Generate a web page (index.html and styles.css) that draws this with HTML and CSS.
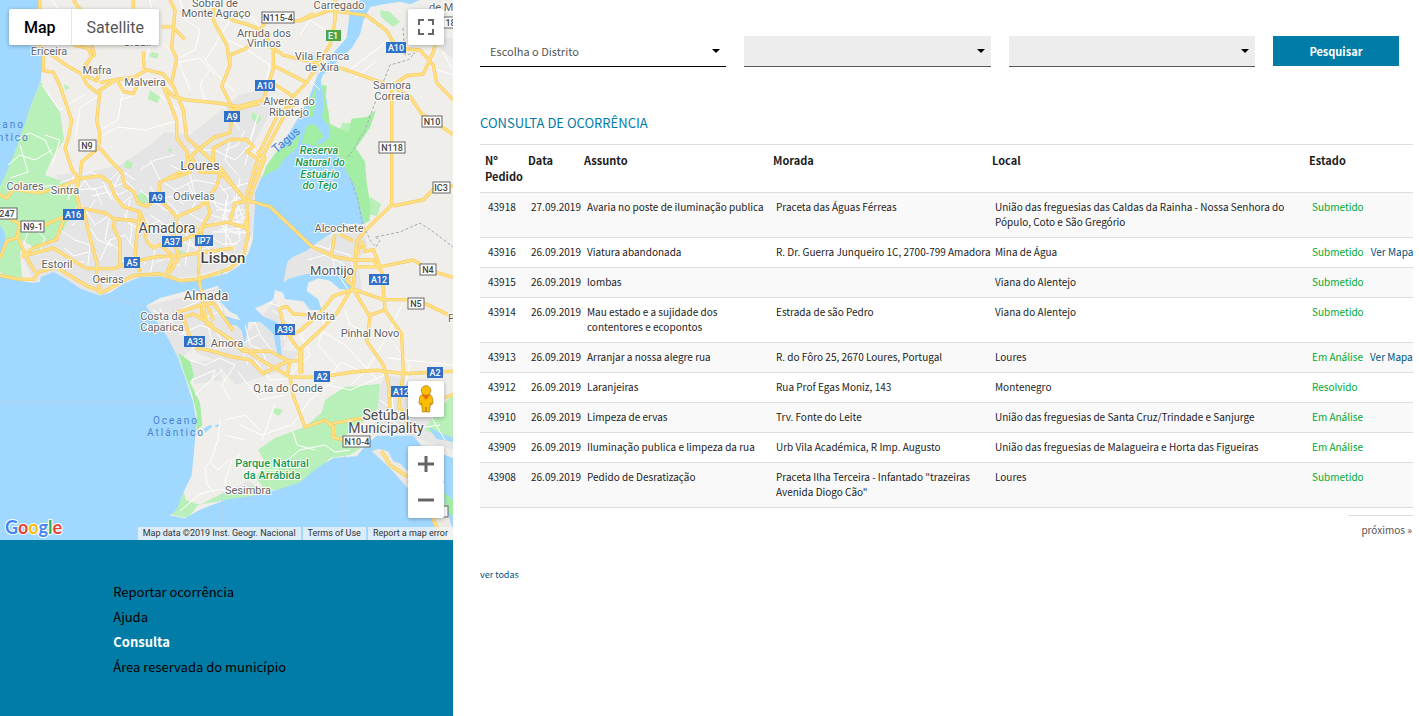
FILE: index.html
```html
<!DOCTYPE html>
<html lang="pt">
<head>
<meta charset="utf-8">
<title>Consulta de ocorrência</title>
<link rel="stylesheet" href="styles.css">
</head>
<body>
<div class="page">
  <aside class="sidebar">
    <div class="map">
      <svg class="map-canvas" viewBox="0 0 453 540" preserveAspectRatio="xMinYMin slice" role="img" aria-label="Lisboa">
        <rect class="land" width="453" height="540"/>
        <!-- urban areas -->
        <g class="urban">
          <path d="M55 175L90 172L120 165L150 145L165 132L190 135L215 115L240 95L262 90L275 105L250 150L262 178L255 230L243 250L225 268L190 277L150 277L115 286L103 296L75 287L50 273L34 283L22 255L55 235L75 200Z"/>
          <path d="M147 306L218 288L225 314L250 330L275 300L290 330L283 350L300 352L285 370L235 385L215 360L190 350L178 362L165 332Z"/>
          <path d="M283 283L283 262L320 240L360 225L368 245L358 262L362 290L345 290L335 277Z"/>
          <path d="M375 400L385 375L405 378L425 405L453 435L453 450L405 435L375 430ZM185 362L218 360L222 380L195 384Z"/>
          <path d="M300 55L320 50L335 68L318 78ZM440 38H453V58L442 50ZM225 495L248 480L270 495Z"/>
        </g>
        <!-- parks -->
        <g class="park">
          <path d="M41 81L48 95L60 112L64 140L52 158L45 175L70 184L80 200L60 235L38 250L22 240L20 255L22 277L8 277L0 272V180Z"/>
          <path d="M322 412L325 400L345 387L380 384L378 404L375 415L352 428L345 437L370 442L350 455L330 458L310 480L290 490L265 490L256 478L265 462L258 450L275 438L305 427Z"/>
          <path d="M172 515L183 490L186 500L200 505L225 492L250 486L270 488L248 500L225 500L198 505L188 518Z"/>
          <path d="M152 52l7 2-3 5-7-3zM150 90l10 7-3 6-9-4zM127 160l6 3-2 6-8-2zM252 112l10 6-5 6-5-5zM64 84l6 4-5 2zM167 148l6 2-3 3zM135 196l10-4 3 10-7 3zM370 197l11 7-4 12-11-2zM342 123l9 0-2 10-9-3zM275 408l8 2-4 6-7-4zM380 10l10 2 10 10-7 5-12-10zM176 250l8 1-3 5-6-3zM437 410L453 395V443L425 430Z"/>
        </g>
        <!-- coastline and roads are plotted on a 1359 by 1568 grid -->
        <g transform="scale(.33333 .34439)">
          <path class="water" d="M0 0H115L112 130L130 165L122 235L95 300L70 370L45 440L20 500L0 540ZM0 655L12 670L18 700L8 725L0 745Z"/>
          <path class="water" d="M0 795L40 812L100 822L120 818L122 805L160 790L190 805L240 838L300 858L330 850L370 825L420 805L480 803L540 818L600 812L680 795L720 770L745 735L758 700L765 600L765 560L785 515L840 430L890 350L925 290L950 225L990 165L1040 110L1050 30L1070 5L1085 0H1260L1230 12L1200 5L1150 12L1110 20L1090 60L1080 100L1055 140L1010 180L970 215L960 240L980 290L985 360L1040 400L1110 640L1085 652L1040 650L990 680L950 705L920 728L880 745L862 760L850 820L865 810L900 800L960 788L1000 800L1020 795L1050 815L1055 840L1020 840L990 815L955 808L925 820L920 845L955 870L965 900L930 900L910 875L855 868L850 850L825 842L820 870L790 885L765 895L790 920L830 935L840 980L845 1035L832 1025L820 970L800 950L780 935L745 935L735 1000L725 960L710 945L680 940L665 915L700 925L722 930L710 915L690 905L655 870V830L600 845L560 845L480 865L438 888L465 925L500 975L535 1040L560 1110L580 1170L590 1230L583 1300L575 1380L550 1430L530 1480L510 1497L555 1505L600 1480L680 1450L760 1440L840 1420L900 1400L950 1360L1000 1330L1070 1325L1100 1290L1130 1265L1240 1265L1265 1295L1359 1330V1568H0Z"/>
          <path class="water" d="M610 1245l20-12 8 6-22 16zM645 1235l14-4v6l-12 4zM1285 1240L1330 1262L1359 1270V1282L1310 1275Z"/>
          <path class="reserve" d="M965 245L980 250L976 290L985 320L990 360L1045 385L1055 345L1100 340L1128 320L1110 370L1068 430L1095 470L1100 530L1112 600L1108 640L1093 650L1075 590L1065 540L1040 500L1025 460L985 440L950 425L905 415L920 365L945 360L975 400L985 380L965 345L972 300ZM785 520L800 480L830 440L870 420L905 385L890 430L850 465L835 490L810 500ZM925 340L930 290L950 250L945 310L938 340Z"/>
          <path class="reserve" d="M535 1025L570 1050L582 1090L570 1110L600 1170L607 1235L590 1250L590 1200L575 1140L555 1090ZM1330 1430L1359 1450V1500L1340 1480Z"/>
          <path class="channel" d="M958 235L955 290L950 330L985 375L980 400L955 415"/>
          <path class="sand" d="M1115 1310L1135 1303L1165 1310L1180 1340L1200 1345L1225 1370L1330 1450L1359 1540V1568H1320L1290 1500L1225 1420L1170 1360Z"/>
        </g>
        <!-- local roads -->
        <g class="minor">
          <path d="M52 0L70 25L95 40M180 0L186 20L200 30L195 50L175 60M150 0L155 30L143 68M230 20L215 45L205 60L222 80L235 92M118 80L122 95L118 120L100 130L98 140M135 78V95L120 100M100 95L80 108L75 140M160 95L178 110M98 138L118 127L145 130L180 120M42 85L60 110L75 100L85 95M15 140L30 133L45 140L52 155M8 165L20 155L35 160L52 150M20 145L28 172L10 178M45 135L60 140L52 165M210 70L200 85L205 100L222 105L240 130M178 60L190 90M165 45L180 62L200 58L215 75"/>
          <path d="M20 182L35 190L50 185L70 195M22 250L30 225L45 238L38 255M60 183L90 172L110 180L120 170L135 180M75 170L68 200M82 205L95 225L110 215L105 240L120 250M60 230L75 240L90 245L88 265M95 200L85 215L72 225M100 260L110 240L125 235L135 250L132 270M130 200L125 220L140 230L160 220M145 232L155 250L150 275M150 160L160 180L175 190L195 180L220 185M170 165L190 175L195 195L210 205M140 190L165 210L182 215M150 215L165 225L180 222L190 240L185 265M155 245L180 240L200 250L215 245M200 240L215 255L228 248L240 240M205 200L225 205L245 195M210 215L230 220L250 210M215 180L228 195L222 225L235 250M240 178L236 200L245 225M218 230L245 228M222 190L248 183M230 140L225 160L238 175M140 170L155 160L175 155M110 185L118 195L128 190M190 150L215 150L235 160L250 145M245 130L238 145L225 150M255 125L245 165M258 115L250 140L260 160M88 176L78 190L95 188L102 205M103 182L110 195L120 175L135 190"/>
          <path d="M84 180L92 190L104 186L112 200M92 196L108 192L120 205L132 196M100 176L116 186L126 182M150 186L158 200L172 196L184 204M152 204L166 200L178 212M188 184L196 200L190 214L204 222M212 190L216 206L228 212L240 208M222 214L232 226L246 216M220 224L236 234L248 232M210 236L222 244L238 244M214 248L230 256M226 200V250M234 196L240 240M216 210H246M214 222H250M212 232H248M120 262L136 256L146 264M156 262L168 258L180 266M64 248L74 256L88 252M70 262L84 262M90 228L98 240L112 246M124 214L132 226L130 244M146 218L152 232L166 232M172 228L184 232L194 246"/>
          <path d="M153 310L170 320L185 335L195 352M165 320L180 310L205 298M180 335L200 325L215 330L225 345M185 345L210 350L230 345M190 360L205 365L220 358L235 365L222 385L230 400M245 325L250 345L262 350L270 370M255 322L260 335L275 355M215 295L222 310L205 318L212 340M160 308L168 330M192 380L215 370L212 382M195 395L222 370M258 335L240 345L248 365M284 340L288 328M220 420L218 440L211 460L205 468L207 485L214 492M211 463L218 470L229 460M180 511L200 494L215 490L240 489M240 455L232 460L225 480L228 492M262 440L275 405M225 420L245 415L260 430M292 425L310 400L335 380M327 385L350 390L385 375M255 470L275 470L300 450L325 445L335 452L350 450M293 432L297 445L315 450M240 425L262 435L290 425"/>
          <path d="M290 320L305 345L320 330L345 345L378 380M345 310L350 325L370 333M403 303L385 340L365 372L350 385M388 358L453 365M308 260L325 255L345 265M315 245L350 255L355 275M330 245L335 270L352 295M300 330L310 355L290 375M325 318L318 345L340 370M363 372L340 362L325 385M395 345L410 365L405 385M350 70L393 36M355 78L375 62M443 52L453 70M250 15L262 30L240 40M245 48L270 65L265 85L285 92M228 40L248 50M325 30L310 20L300 35M320 90L310 80M425 35L453 20M432 68L453 75"/>
          <path d="M270 303L285 308L296 320M272 310L284 318L282 330M255 360L270 380L300 378M238 372L260 400L285 395M225 435L245 440M380 400L400 415L425 410M385 415L405 430L440 425M430 415L445 440M392 395L395 430"/>
        </g>
        <!-- main roads: casing under fill -->
        <defs>
          <g id="roads" transform="scale(.33333 .34439)">
            <path d="M120 0L118 40L112 130L130 165V205L160 210L180 250L205 320L215 350L205 400L195 430L215 490L235 520L230 570L240 605L190 640L170 695L100 720L65 745M112 130L200 190L245 215L260 245L290 268L350 230L400 225L440 203L490 215L520 250L550 320L560 400L595 430L640 470L665 490M220 130L265 140L275 165L255 190L300 210L290 235L245 215M300 240L345 232M350 230L370 265L400 272L410 250M300 265L290 350L300 390L295 430L245 470L240 515M300 430L330 465L365 500L375 540L400 555L415 590L440 600L470 575M235 520L300 510L330 530L345 570L370 600L420 615L430 640M0 565L20 575L40 550L120 560L190 540L235 520M250 605L320 620L340 635L400 640L460 660H590M250 605L270 690L290 760V800L300 850M345 635L340 660L360 700V770M430 150L432 200M275 130L285 165M220 0L245 35M400 0V25M510 0L525 30L515 140L530 170L515 240M485 78H520M525 85L555 115"/>
            <path d="M65 745L160 720L200 745L260 780H340L400 760L470 745H520L595 735L700 720M0 800L50 810L100 812L115 790L170 775L200 795L260 830L290 840L305 850L335 835L400 800L480 795L540 815L600 810L690 780L730 745L745 680L740 590M0 750L20 700L50 690L60 650L20 630L0 620M55 690L75 740L105 790M130 655L190 630M420 615L410 690L405 740L420 790M430 640L440 700L460 720L480 710L520 745L500 795M540 740L520 775L505 795M595 430L540 500L480 530L475 570L500 600L530 630L600 600L630 570M530 630L520 700L535 740M665 490L650 540L620 580L630 620L605 660L600 730L595 790L605 860L620 940L700 990L790 1050L870 1095M600 430L640 400L690 385L695 340M715 310L660 300L560 290L520 280L490 250L530 350V400L560 440L570 500L510 520M640 470L640 430L690 405H740L760 425L740 440L770 460M695 330L690 300L665 250L690 190L680 130L640 60V0M690 190V160L740 140L800 60L900 60L990 30M570 450L600 500L660 500L700 540L735 580M600 660L680 645L750 665M690 645L705 590L735 585M735 640L745 680M540 700L590 680L605 660"/>
            <path d="M715 310L790 290L870 290L920 240L990 130L1005 60V0M695 320L780 300M735 580L755 520L780 440L830 340L870 300M745 590L775 500L795 440L850 340L885 300M770 440L795 460L770 520M665 490L700 540L735 580L810 600L935 715L1000 745L1060 755H1120L1145 790L1155 900L1205 970L1210 1080L1195 1190M990 30L1100 45L1160 90L1190 140L1260 145L1300 190L1310 240L1359 290M945 0L980 30L1010 20L1050 30M900 60L940 40M820 140V200L800 260L790 290M820 190L870 215L920 240M825 245L880 280M815 140L790 90L740 70L700 60L680 40M820 140L850 160L890 170L1030 200L1175 250L1230 280L1265 330L1359 390M1175 250V595L1100 665L1070 700L1060 830L1010 910L960 960L905 1010V1085M1180 598L1270 580L1300 550L1359 540M1175 250L1220 220L1270 215L1300 150L1325 60M1060 775H1140L1240 755L1290 785L1359 805M1060 840L1150 870H1250L1359 920M1060 840L1110 920L1100 990L1150 1060L1165 1110L1170 1190M1110 915L1155 900M1060 840L1000 860L960 910L900 960L870 975M840 895L860 890L880 912L940 915M838 895L850 940L870 980L900 1020V1085M1085 700L1095 730L1120 725L1140 775M1060 700L1020 680M1005 680L995 735M1085 700L1070 740M1060 830L1040 815L1055 790"/>
            <path d="M870 1095H960L1060 1080L1130 1075L1210 1085L1359 1078M870 1095L880 1150L915 1240L975 1220L1000 1240V1270L1040 1280M995 1230L1110 1210M680 980L730 1020H810L870 1050L860 1095M585 1010L640 1020L690 1035L750 1045L790 1085L860 1050L905 1045M520 910L605 885L640 880L700 960M550 920L580 912L640 945M550 920L570 980M620 880L640 930M605 890V930M1145 1310L1170 1350L1225 1385M1290 1490L1330 1568M1225 1240L1200 1180M1335 1155L1359 1145"/>
          </g>
        </defs>
        <use href="#roads" class="road-casing"/>
        <use href="#roads" class="road-fill"/>
        <path class="boundary" d="M403 28L405 55L415 53L408 60L390 65L384 80L376 100L365 130L350 155L345 158M350 178L358 200L362 222L370 240L376 247L380 240L375 237L400 232L420 223L435 233L453 247"/>
        <path class="graticule" d="M0 402H192M222 495V540M222 270V290M345 455V540"/>
        <path class="ferry" d="M104 297L147 307"/>
        <!-- place names -->
        <g class="place">
          <text x="215" y="7">Sobral de</text><text x="216" y="17">Monte Agraço</text>
          <text x="339" y="9">Carregado</text><text x="446" y="11">de Mar</text>
          <text x="264" y="37">Arruda dos</text><text x="264" y="47">Vinhos</text>
          <text x="322" y="60">Vila Franca</text><text x="322" y="71">de Xira</text>
          <text x="49" y="55">Ericeira</text><text x="97" y="74">Mafra</text><text x="145" y="86">Malveira</text>
          <text x="289" y="105">Alverca do</text><text x="289" y="116">Ribatejo</text>
          <text x="392" y="89">Samora</text><text x="392" y="100">Correia</text>
          <text x="25" y="190">Colares</text><text x="65" y="194">Sintra</text><text x="194" y="200">Odivelas</text>
          <text x="57" y="268">Estoril</text><text x="108" y="283">Oeiras</text>
          <text x="339" y="232">Alcochete</text><text x="321" y="320">Moita</text><text x="370" y="337">Pinhal Novo</text>
          <text x="162" y="320">Costa da</text><text x="162" y="331">Caparica</text><text x="227" y="347">Amora</text>
          <text x="288" y="392">Q.ta do Conde</text><text x="248" y="494">Sesimbra</text><text x="137" y="46">Gradil</text>
          <text x="451" y="322">F</text>
        </g>
        <g class="town">
          <text x="200" y="170">Loures</text><text x="206" y="300">Almada</text><text x="332" y="275">Montijo</text>
        </g>
        <g class="city">
          <text x="167" y="233">Amadora</text><text x="386" y="420">Setúbal</text><text x="386" y="433">Municipality</text>
        </g>
        <text class="capital" x="223" y="263">Lisbon</text>
        <g class="nature">
          <g class="slanted"><text x="319" y="154">Reserva</text><text x="320" y="166">Natural do</text><text x="320" y="178">Estuário</text><text x="320" y="189">do Tejo</text></g>
          <text x="272" y="467">Parque Natural</text><text x="272" y="479">da Arrábida</text>
        </g>
        <g class="sea">
          <text x="176" y="424">Oceano</text><text x="176" y="436">Atlântico</text>
          <text x="10" y="128">eano</text><text x="10" y="141">ântico</text>
        </g>
        <text class="river" x="286" y="144" transform="rotate(-41 286 140)">Tagus</text>
        <!-- road shields -->
        <g class="shield motorway">
          <rect x="386" y="42" width="20" height="11"/><text x="396" y="51">A10</text>
          <rect x="255" y="80" width="20" height="11"/><text x="265" y="89">A10</text>
          <rect x="224" y="111" width="16" height="11"/><text x="232" y="120">A9</text>
          <rect x="149" y="192" width="16" height="11"/><text x="157" y="201">A9</text>
          <rect x="63" y="209" width="21" height="11"/><text x="73" y="218">A16</text>
          <rect x="162" y="236" width="20" height="11"/><text x="172" y="245">A37</text>
          <rect x="195" y="235" width="18" height="11"/><text x="204" y="244">IP7</text>
          <rect x="124" y="257" width="16" height="11"/><text x="132" y="266">A5</text>
          <rect x="184" y="336" width="21" height="11"/><text x="195" y="345">A33</text>
          <rect x="369" y="274" width="20" height="11"/><text x="379" y="283">A12</text>
          <rect x="275" y="324" width="20" height="11"/><text x="285" y="333">A39</text>
          <rect x="314" y="371" width="16" height="11"/><text x="322" y="380">A2</text>
          <rect x="427" y="367" width="16" height="11"/><text x="435" y="376">A2</text>
          <rect x="391" y="386" width="20" height="11"/><text x="401" y="395">A12</text>
        </g>
        <g class="shield europe"><rect x="326" y="30" width="15" height="11"/><text x="333" y="39">E1</text></g>
        <g class="shield national">
          <rect x="262" y="12" width="32" height="11"/><text x="278" y="21">N115-4</text>
          <rect x="436" y="17" width="26" height="11"/><text x="448" y="26">118</text>
          <rect x="79" y="140" width="17" height="11"/><text x="87" y="149">N9</text>
          <rect x="422" y="116" width="20" height="11"/><text x="432" y="125">N10</text>
          <rect x="379" y="142" width="26" height="11"/><text x="392" y="151">N118</text>
          <rect x="433" y="182" width="17" height="11"/><text x="441" y="191">IC3</text>
          <rect x="-8" y="208" width="25" height="11"/><text x="7" y="217">247</text>
          <rect x="21" y="221" width="23" height="11"/><text x="33" y="230">N9-1</text>
          <rect x="420" y="264" width="16" height="11"/><text x="428" y="273">N4</text>
          <rect x="408" y="298" width="16" height="11"/><text x="416" y="307">N5</text>
          <rect x="343" y="436" width="27" height="11"/><text x="357" y="445">N10-4</text>
          <rect x="432" y="506" width="16" height="11"/>
        </g>
        <text class="logo" x="5" y="534"><tspan class="g-blue">G</tspan><tspan class="g-red">o</tspan><tspan class="g-yellow">o</tspan><tspan class="g-blue">g</tspan><tspan class="g-green">l</tspan><tspan class="g-red">e</tspan></text>
      </svg>
      <div class="map-types">
        <button class="map-type map-type-on" type="button">Map</button>
        <button class="map-type" type="button">Satellite</button>
      </div>
      <button class="map-button fullscreen" type="button" aria-label="Fullscreen">
        <svg width="16" height="16" viewBox="0 0 16 16"><path d="M0 0H6V2H2V6H0ZM10 0H16V6H14V2H10ZM0 10H2V14H6V16H0ZM14 10H16V16H10V14H14Z"/></svg>
      </button>
      <div class="map-controls">
        <button class="map-button" type="button" aria-label="Street View">
          <svg width="16" height="28" viewBox="0 0 16 28"><path fill="#fbbc04" stroke="#a9740b" stroke-width=".7" d="M5 9.500C2 10 1.500 11.500 1 18.500L3 20L3.500 18L4.500 27H7.500L8 22L8.500 27H11.500L12.500 18L13 20L15 18.500C14.500 11.500 14 10 11 9.500Z"/><circle cx="8" cy="5.500" r="4.800" fill="#fbbc04" stroke="#a9740b" stroke-width=".7"/><path fill="#e8710a" d="M4 10H12L8 15Z"/></svg>
        </button>
        <div class="zoom">
          <button class="map-button" type="button" aria-label="Zoom in"><svg width="16" height="16" viewBox="0 0 16 16"><path d="M6.500 0H9.500V6.500H16V9.500H9.500V16H6.500V9.500H0V6.500H6.500Z"/></svg></button>
          <button class="map-button" type="button" aria-label="Zoom out"><svg width="16" height="16" viewBox="0 0 16 16"><path d="M0 6.500H16V9.500H0Z"/></svg></button>
        </div>
      </div>
      <div class="map-credits">
        <span>Map data ©2019 Inst. Geogr. Nacional</span>
        <a href="#">Terms of Use</a>
        <a href="#">Report a map error</a>
      </div>
    </div>
    <nav class="menu">
      <a href="#">Reportar ocorrência</a>
      <a href="#">Ajuda</a>
      <a href="#" class="current">Consulta</a>
      <a href="#">Área reservada do município</a>
    </nav>
  </aside>
  <main class="content">
    <form class="filters">
      <div class="field"><select aria-label="Distrito"><option>Escolha o Distrito</option></select></div>
      <div class="field"><select aria-label="Concelho" disabled><option></option></select></div>
      <div class="field"><select aria-label="Freguesia" disabled><option></option></select></div>
      <button class="search" type="button">Pesquisar</button>
    </form>
    <h1>CONSULTA DE OCORRÊNCIA</h1>
    <table class="requests">
      <colgroup><col class="c-id"><col class="c-date"><col class="c-subject"><col class="c-address"><col class="c-place"><col class="c-state"></colgroup>
      <thead><tr><th>Nº Pedido</th><th>Data</th><th>Assunto</th><th>Morada</th><th>Local</th><th>Estado</th></tr></thead>
      <tbody>
        <tr><td>43918</td><td>27.09.2019</td><td>Avaria no poste de iluminação publica</td><td>Praceta das Águas Férreas</td><td>União das freguesias das Caldas da Rainha - Nossa Senhora do Pópulo, Coto e São Gregório</td><td><span class="state">Submetido</span></td></tr>
        <tr><td>43916</td><td>26.09.2019</td><td>Viatura abandonada</td><td class="one-line">R. Dr. Guerra Junqueiro 1C, 2700-799 Amadora</td><td>Mina de Água</td><td><span class="state">Submetido</span><a href="#">Ver Mapa</a></td></tr>
        <tr><td>43915</td><td>26.09.2019</td><td>lombas</td><td></td><td>Viana do Alentejo</td><td><span class="state">Submetido</span></td></tr>
        <tr><td>43914</td><td>26.09.2019</td><td>Mau estado e a sujidade dos contentores e ecopontos</td><td>Estrada de são Pedro</td><td>Viana do Alentejo</td><td><span class="state">Submetido</span></td></tr>
        <tr><td>43913</td><td>26.09.2019</td><td>Arranjar a nossa alegre rua</td><td>R. do Fôro 25, 2670 Loures, Portugal</td><td>Loures</td><td><span class="state">Em Análise</span><a href="#">Ver Mapa</a></td></tr>
        <tr><td>43912</td><td>26.09.2019</td><td>Laranjeiras</td><td>Rua Prof Egas Moniz, 143</td><td>Montenegro</td><td><span class="state">Resolvido</span></td></tr>
        <tr><td>43910</td><td>26.09.2019</td><td>Limpeza de ervas</td><td>Trv. Fonte do Leite</td><td>União das freguesias de Santa Cruz/Trindade e Sanjurge</td><td><span class="state">Em Análise</span></td></tr>
        <tr><td>43909</td><td>26.09.2019</td><td>Iluminação publica e limpeza da rua</td><td>Urb Vila Académica, R Imp. Augusto</td><td>União das freguesias de Malagueira e Horta das Figueiras</td><td><span class="state">Em Análise</span></td></tr>
        <tr><td>43908</td><td>26.09.2019</td><td>Pedido de Desratização</td><td>Praceta Ilha Terceira - Infantado "trazeiras Avenida Diogo Cão"</td><td>Loures</td><td><span class="state">Submetido</span></td></tr>
      </tbody>
    </table>
    <div class="pager"><a href="#">próximos »</a></div>
    <a class="all" href="#">ver todas</a>
  </main>
</div>
</body>
</html>
```
FILE: styles.css
```css
* { box-sizing: border-box; }
body { margin: 0; background: #fff; color: #1c1c1c; font: 10px/15px "Noto Sans CJK SC", "Noto Sans", sans-serif; }
a { color: #00527f; text-decoration: none; }
button, select { font-family: inherit; border: 0; border-radius: 0; padding: 0; }
button { cursor: pointer; }

.page { display: grid; grid-template-columns: 453fr 966fr; min-height: 100vh; }
.sidebar { display: flex; flex-direction: column; min-width: 0; background: #007ca6; }
.menu { display: flex; flex-direction: column; padding: 39px 25% 32px; font-size: 13px; line-height: 25px; white-space: nowrap; }
.menu a { color: #000; }
.menu .current { color: #fff; font-weight: bold; }

/* Map */
.map { position: relative; height: 540px; overflow: hidden; font-family: Roboto, sans-serif; }
.map-canvas { display: block; width: 100%; height: 100%; font-family: Roboto, sans-serif; }
.land { fill: #efeeea; }
.urban { fill: #e5e5e5; }
.park { fill: #b9f0b9; }
.reserve { fill: #a3eda5; }
.water { fill: #a0d8ff; }
.channel { fill: none; stroke: #a0d8ff; stroke-width: 12; stroke-linejoin: round; }
.sand { fill: #ece9e2; }
.minor { fill: none; stroke: #fff; stroke-width: 1; }
.road-casing { fill: none; stroke: #fbcb5c; stroke-width: 10; stroke-linejoin: round; }
.road-fill { fill: none; stroke: #ffe187; stroke-width: 6; stroke-linejoin: round; }
.boundary { fill: none; stroke: #a3adb8; stroke-width: 1; stroke-dasharray: 3 2; }
.graticule, .ferry { fill: none; stroke: #b4d3e8; stroke-width: 1; }
.map-canvas text { text-anchor: middle; paint-order: stroke; stroke: #fff; stroke-width: 2px; stroke-linejoin: round; }
.place { font-size: 11px; fill: #5f5f5f; }
.town { font-size: 13px; fill: #555; }
.city { font-size: 14px; fill: #4c4c4c; }
.capital { font-size: 15px; font-weight: 500; fill: #444; }
.nature { font-size: 11px; font-weight: 500; fill: #149950; }
.slanted { font-style: italic; }
.map-canvas .sea text { font-size: 10px; letter-spacing: 2px; fill: #4c83cf; stroke: none; }
.map-canvas .river { font-size: 12px; fill: #4c83cf; stroke: none; }
.shield { font-size: 9px; font-weight: 500; }
.map-canvas .shield text { stroke: none; }
.motorway rect { fill: #2f70c8; }
.europe rect { fill: #4ba546; }
.motorway text, .europe text { fill: #fff; }
.national rect { fill: #fff; stroke: #666; stroke-width: 1; }
.national text { fill: #444; }
.map-canvas .logo { font: bold 18px Lato, sans-serif; text-anchor: start; }
.g-blue { fill: #4285f4; }
.g-red { fill: #ea4335; }
.g-yellow { fill: #fbbc05; }
.g-green { fill: #34a853; }

.map-types { position: absolute; top: 9px; left: 9px; display: flex; background: #fff; box-shadow: 0 1px 4px rgba(0, 0, 0, .3); border-radius: 2px; }
.map-type { height: 36px; padding: 0 15px; background: none; color: #565656; font-size: 16px; }
.map-type-on { color: #000; font-weight: 500; border-right: 1px solid #e6e6e6; }
.map-button { display: flex; align-items: center; justify-content: center; width: 36px; height: 36px; background: #fff; border-radius: 2px; fill: #666; }
.fullscreen { position: absolute; top: 9px; right: 9px; box-shadow: 0 1px 4px rgba(0, 0, 0, .3); }
.map-controls { position: absolute; right: 9px; bottom: 22px; display: grid; gap: 29px; }
.map-controls > * { box-shadow: 0 1px 4px rgba(0, 0, 0, .3); }
.zoom { border-radius: 2px; }
.map-credits { position: absolute; right: 0; bottom: 0; display: flex; gap: 2px; font-size: 9px; line-height: 13px; }
.map-credits > * { padding: 0 5px; background: rgba(245, 245, 245, .7); color: #333; white-space: nowrap; }

/* Search */
.content { min-width: 0; padding: 36px 6px 40px 27px; }
.filters { display: grid; grid-template-columns: 246fr 246fr 246fr 126fr; gap: 18px; margin-right: 14px; }
.field { position: relative; }
.field::after { content: ""; position: absolute; right: 6px; top: 13px; border: 4px solid transparent; border-top-color: #000; border-bottom: 0; pointer-events: none; }
.field select { appearance: none; display: block; width: 100%; height: 31px; padding: 0 10px; border-bottom: 1px solid #000; background: #fff; color: #555; font-size: 11px; opacity: 1; }
.field select:disabled { background: #ededed; border-color: #555; }
.search { height: 30px; background: #007ca6; color: #fff; font-size: 11px; font-weight: bold; }

h1 { margin: 46px 0 11px; color: #007ca6; font-size: 13px; line-height: 20px; font-weight: normal; }
.requests { width: 100%; table-layout: fixed; border-collapse: collapse; border-top: 1px solid #ddd; }
.c-id { width: 43px; }
.c-date { width: 56px; }
.c-subject { width: 189px; }
.c-address { width: 219px; }
.c-state { width: 109px; }
.requests th { padding: 7px 0 8px 5px; text-align: left; vertical-align: top; font-size: 11px; line-height: 16px; }
.requests td { padding: 6px 0 8px 8px; vertical-align: top; }
.requests tr { border-bottom: 1px solid #ddd; }
.requests tbody tr:nth-child(odd) { background: #f9f9f9; }
.requests td:last-child, .one-line { white-space: nowrap; }
.state { color: #00a82d; margin-right: 7px; }
.pager { display: flex; justify-content: flex-end; margin-top: 7px; }
.pager a { padding: 6px 1px 6px 13px; border-top: 1px solid #ddd; color: #555; }
.all { display: inline-block; margin-top: 24px; font-size: 9px; }
```
